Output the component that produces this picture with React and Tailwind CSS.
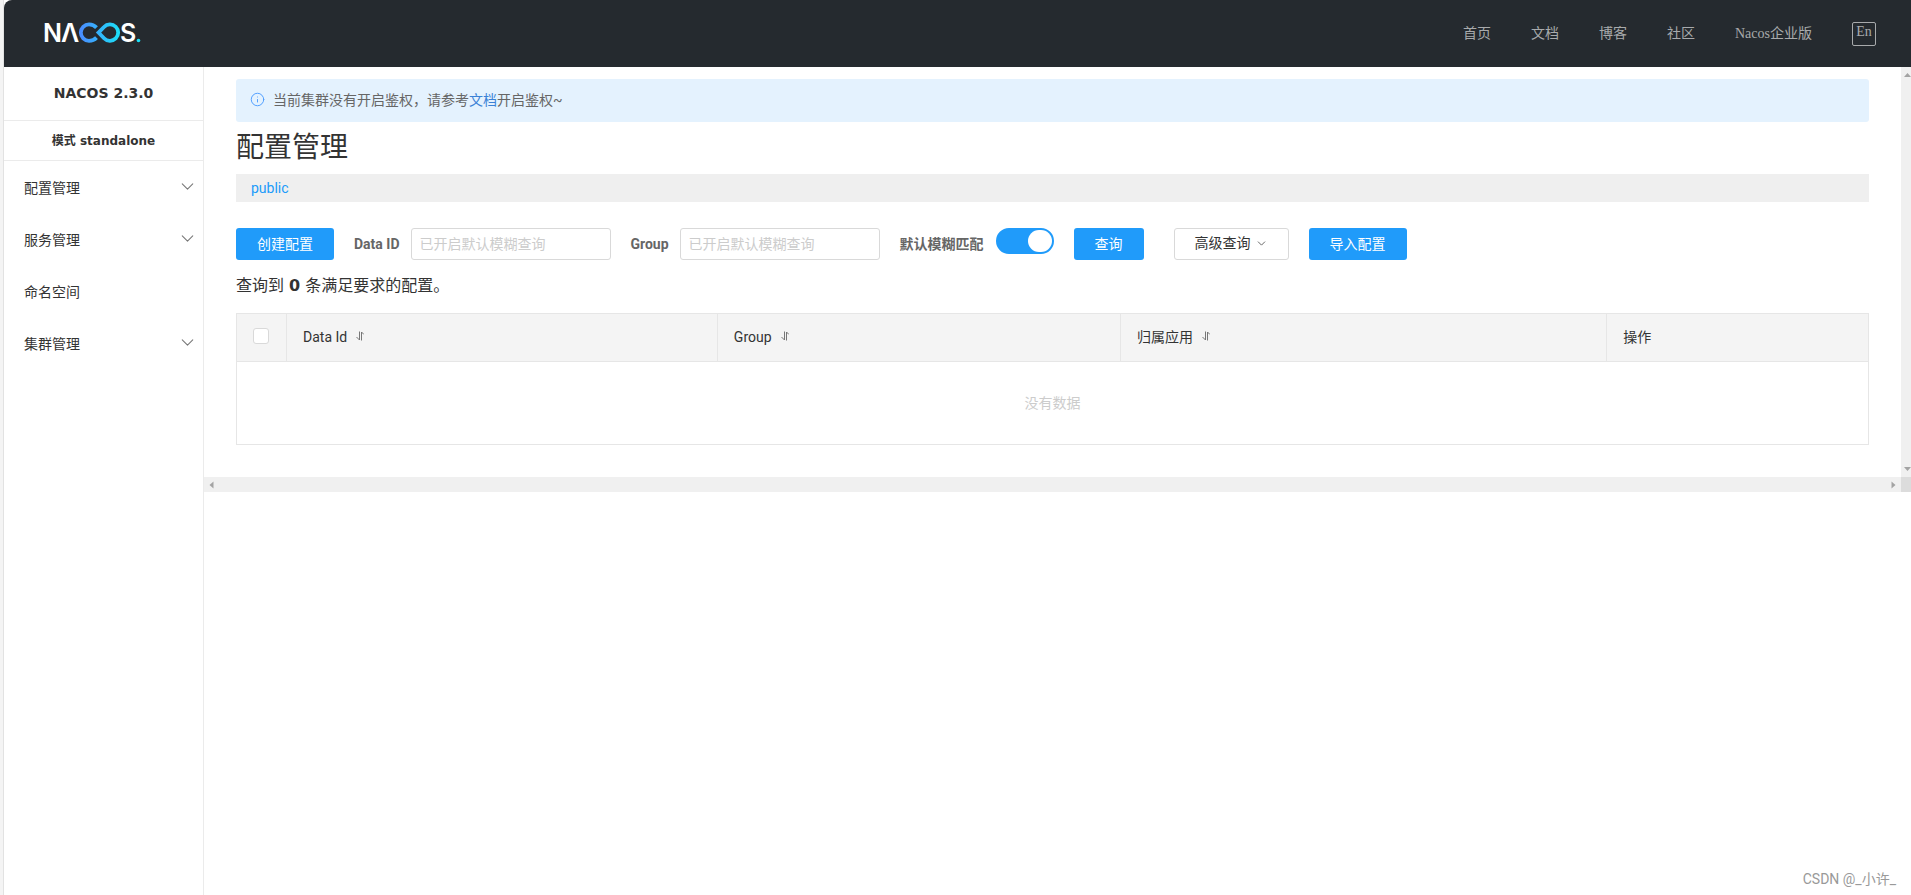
import { ChevronDown, Info } from 'lucide-react'

const navLinks = ['首页', '文档', '博客', '社区', 'Nacos企业版']

const menuItems = [
  { label: '配置管理', hasChildren: true },
  { label: '服务管理', hasChildren: true },
  { label: '命名空间', hasChildren: false },
  { label: '集群管理', hasChildren: true }
]

const columns = [
  { label: 'Data Id', width: 'w-[26.4%]', sortable: true },
  { label: 'Group', width: 'w-[24.7%]', sortable: true },
  { label: '归属应用', width: 'w-[29.8%]', sortable: true },
  { label: '操作', width: '', sortable: false }
]

function Logo() {
  return (
    <svg className="h-10 w-[108px]" viewBox="-4 -6 108 40" role="img" aria-label="NACOS">
      <defs>
        <linearGradient id="loop" gradientUnits="userSpaceOnUse" x1="36" y1="0" x2="76" y2="0">
          <stop offset="0" stopColor="#4a8cff" />
          <stop offset="1" stopColor="#1be0f7" />
        </linearGradient>
      </defs>
      <g fill="#fff" fontSize="25" fontWeight="600" fontFamily="Inter, 'Liberation Sans', sans-serif">
        <text x="-1" y="22">N</text>
        <text x="17" y="22">Λ</text>
        <text x="76" y="22">S</text>
      </g>
      <g fill="none" stroke="url(#loop)" strokeWidth="3.8">
        <path d="M52.500 7.600C50.500 5.400 48 4.400 45 4.400a8.200 8.200 0 0 0 0 16.400c3 0 5.500-1 7.500-3.200" />
        <path d="M54.500 12.600L60 7A8.200 8.200 0 1 1 60 18.200Z" />
      </g>
      <circle cx="94.500" cy="20.500" r="1.800" fill="#1be0f7" />
    </svg>
  )
}

function SortIcon() {
  return (
    <svg className="mb-0.5 h-[10px] w-2" viewBox="0 0 8 10" fill="none" stroke="#777" strokeWidth="1">
      <path d="M3.500 0.500V9L0.500 6" />
      <path d="M5.500 9.500V1L8 3.500" />
    </svg>
  )
}

function Header() {
  return (
    <header className="flex h-[67px] items-center justify-between rounded-tl-lg bg-[#252a2f] pr-[35px] pl-9">
      <a href="#home">
        <Logo />
      </a>
      <nav className="flex items-center gap-10 font-['Liberation_Serif','Noto_Sans_CJK_SC',serif] text-sm text-[#a8aaac]">
        {navLinks.map((label) => (
          <a key={label} href="#nav">{label}</a>
        ))}
        <button className="flex h-6 w-6 justify-center rounded-xs border border-[#a8aaac] leading-[18px]">
          En
        </button>
      </nav>
    </header>
  )
}

function Sidebar() {
  return (
    <aside className="w-[200px] shrink-0 border-r border-[#ebebeb]">
      <h1 className="flex h-[54px] items-center justify-center border-b border-[#ebebeb] pb-0.5 font-['DejaVu_Sans','Noto_Sans_CJK_SC',sans-serif] text-sm font-bold">
        NACOS 2.3.0
      </h1>
      <div className="flex h-10 items-center justify-center border-b border-[#ebebeb] font-['DejaVu_Sans','Noto_Sans_CJK_SC',sans-serif] text-xs font-bold">
        模式 standalone
      </div>
      <ul className="pt-px">
        {menuItems.map((item) => (
          <li key={item.label}>
            <a href="#menu" className="flex h-[52px] items-center justify-between pr-[5px] pl-5">
              {item.label}
              {item.hasChildren && <ChevronDown className="mb-1 h-[21px] w-[21px] text-[#777]" strokeWidth={1.2} />}
            </a>
          </li>
        ))}
      </ul>
    </aside>
  )
}

function SearchField({ id, label }) {
  return (
    <div className="mr-5 flex items-center gap-[11px]">
      <label htmlFor={id} className="font-bold text-[#666]">{label}</label>
      <input
        id={id}
        placeholder="已开启默认模糊查询"
        className="h-8 w-[200px] rounded-[3px] border border-[#d9d9d9] px-2 placeholder:text-[#ccc]"
      />
    </div>
  )
}

function SearchForm() {
  return (
    <form className="mt-[26px] flex h-8 items-center">
      <button type="button" className="mr-5 h-8 rounded-[3px] bg-[#209bfa] px-[21px] text-white">
        创建配置
      </button>
      <SearchField id="dataId" label="Data ID" />
      <SearchField id="group" label="Group" />
      <label htmlFor="fuzzy" className="mr-3 font-bold text-[#666]">默认模糊匹配</label>
      <input
        id="fuzzy"
        type="checkbox"
        role="switch"
        defaultChecked
        className="mr-5 h-[26px] w-[58px] appearance-none self-start rounded-full border-2 border-[#209bfa] bg-[#209bfa] before:block before:h-[22px] before:w-6 before:rounded-full before:bg-white checked:before:ml-[30px]"
      />
      <button type="button" className="mr-[30px] h-8 rounded-[3px] bg-[#209bfa] px-[21px] text-white">
        查询
      </button>
      <button type="button" className="mr-5 flex h-8 items-center gap-1 rounded-[3px] border border-[#d9d9d9] px-5 pb-0.5">
        高级查询
        <ChevronDown className="h-[13px] w-[13px] text-[#666]" strokeWidth={1.8} />
      </button>
      <button type="button" className="h-8 rounded-[3px] bg-[#209bfa] px-[21px] text-white">
        导入配置
      </button>
    </form>
  )
}

function ConfigTable() {
  return (
    <table className="mt-[15px] w-full table-fixed border-collapse border border-[#e6e6e6]">
      <thead>
        <tr className="h-12 bg-[#f4f4f4] text-left">
          <th className="w-[50px] border border-[#e6e6e6] pr-0.5 pb-1">
            <input
              type="checkbox"
              aria-label="全选"
              className="mx-auto block h-4 w-4 appearance-none rounded-[3px] border border-[#d9d9d9] bg-white"
            />
          </th>
          {columns.map((column) => (
            <th key={column.label} className={`border border-[#e6e6e6] px-4 pb-0.5 font-normal ${column.width}`}>
              <span className="flex items-center gap-[9px]">
                {column.label}
                {column.sortable && <SortIcon />}
              </span>
            </th>
          ))}
        </tr>
      </thead>
      <tbody>
        <tr>
          <td colSpan={5} className="h-[83px] text-center text-[#ccc]">没有数据</td>
        </tr>
      </tbody>
    </table>
  )
}

function Arrow({ points, className }) {
  return (
    <svg className={className} viewBox="0 0 8 8" fill="#a3a3a3">
      <polygon points={points} />
    </svg>
  )
}

export default function App() {
  return (
    <div className="flex min-h-screen overflow-hidden bg-white font-[Roboto,'Noto_Sans_CJK_SC',sans-serif] text-sm text-[#333]">
      <div className="w-1 shrink-0 border-r border-[#e2e2e2] bg-[#f4f4f4]" />
      <div className="flex min-w-0 flex-1 flex-col">
        <Header />
        <div className="flex flex-1">
          <Sidebar />
          <div className="flex min-w-0 flex-1 flex-col">
            <div className="flex">
              <main className="min-w-0 flex-1 px-8 pt-3 pb-8">
                <div className="flex h-[43px] items-center gap-2 rounded-[3px] bg-[#e4f2fe] px-[14px] pb-0.5 text-[#666]">
                  <Info className="h-[15px] w-[15px] text-[#4a9bff]" strokeWidth={1.5} />
                  <p>
                    当前集群没有开启鉴权，请参考<a href="#docs" className="text-[#3b82d6]">文档</a>开启鉴权~
                  </p>
                </div>
                <h2 className="flex h-[52px] items-center text-[28px]">配置管理</h2>
                <div className="flex h-7 items-center bg-[#efefef] px-[15px]">
                  <a href="#public" className="text-[#209bfa]">public</a>
                </div>
                <SearchForm />
                <p className="mt-[13px] font-['DejaVu_Sans','Noto_Sans_CJK_SC',sans-serif] text-base/[25px]">
                  查询到 <strong>0</strong> 条满足要求的配置。
                </p>
                <ConfigTable />
              </main>
              <div className="flex w-[10px] shrink-0 flex-col items-end justify-between overflow-hidden bg-[#f0f0f0] py-1">
                <Arrow points="1,6 4.500,2 8,6" className="h-2 w-2" />
                <Arrow points="1,2 8,2 4.500,6" className="h-2 w-2" />
              </div>
            </div>
            <div className="flex h-[15px] bg-[#f0f0f0]">
              <div className="flex flex-1 items-center justify-between px-1">
                <Arrow points="5.500,0.500 5.500,7.500 1.500,4" className="h-2 w-2" />
                <Arrow points="2.500,0.500 2.500,7.500 6.500,4" className="h-2 w-2" />
              </div>
              <div className="w-[10px] bg-[#dcdcdc]" />
            </div>
            <p className="mt-auto pr-[15px] pb-[6px] text-right text-[#999]">
              CSDN @_小许_
            </p>
          </div>
        </div>
      </div>
    </div>
  )
}
